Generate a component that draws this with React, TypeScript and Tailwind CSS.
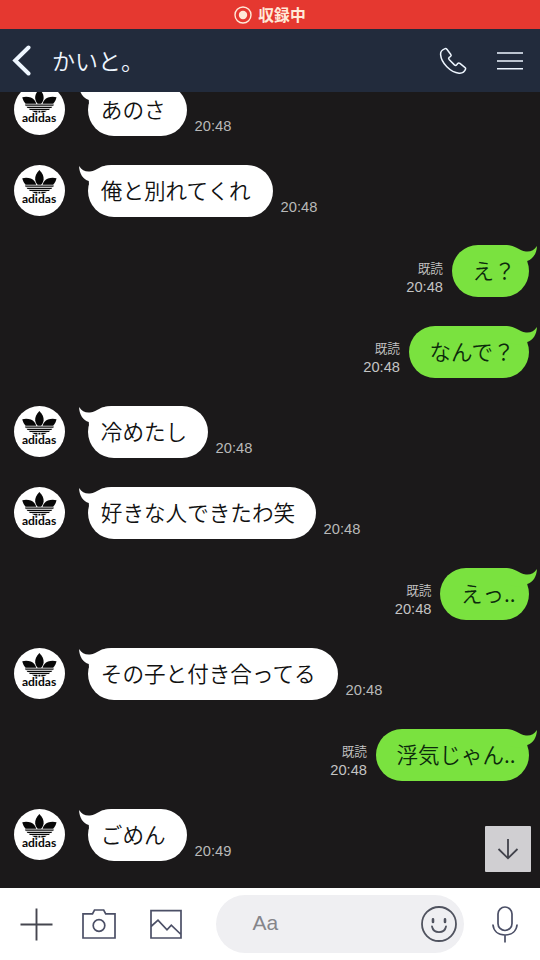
import React from "react";

type Message = {
  text: string;
  time: string;
  mine?: boolean;
  width: string;
};

const messages: Message[] = [
  { text: "あのさ", time: "20:48", width: "w-[99px]" },
  { text: "俺と別れてくれ", time: "20:48", width: "w-[185px]" },
  { text: "え？", time: "20:48", mine: true, width: "w-[77px]" },
  { text: "なんで？", time: "20:48", mine: true, width: "w-[120px]" },
  { text: "冷めたし", time: "20:48", width: "w-[120px]" },
  { text: "好きな人できたわ笑", time: "20:48", width: "w-[228px]" },
  { text: "えっ..", time: "20:48", mine: true, width: "w-[88.5px]" },
  { text: "その子と付き合ってる", time: "20:48", width: "w-[250px]" },
  { text: "浮気じゃん..", time: "20:48", mine: true, width: "w-[153px]" },
  { text: "ごめん", time: "20:49", width: "w-[99px]" },
];

function Avatar() {
  return (
    <svg viewBox="0 0 51 51" className="h-[51px] w-[51px] shrink-0">
      <circle cx="25.5" cy="25.5" r="25.5" fill="#fff" />
      <g fill="#080808">
        <path d="M25.4 5C28.600 8.300 29.900 11.500 29.600 14.500C29.300 17 28 18.900 27.100 19.700H23.700C22.800 18.900 21.500 17 21.200 14.500C20.900 11.500 22.200 8.300 25.400 5Z" />
        <path d="M8.300 13.300C13 12 18 13.300 20.300 16C21.400 17.300 22 18.700 22.200 19.700H11.600C9.900 18 8.800 15.800 8.300 13.300Z" />
        <path d="M42.500 13.300C37.800 12 32.800 13.300 30.500 16C29.400 17.300 28.800 18.700 28.600 19.700H39.200C40.900 18 42 15.800 42.500 13.300Z" />
        <path d="M11 20.400H39.800L39.300 21.700H11.500Z" />
        <path d="M12.500 22.700H38.300L37.300 23.900H13.500Z" />
        <path d="M14.600 24.800H36.200L34.800 26H16Z" />
        <path d="M18 26.800H23.500V28.600C21.200 28.500 19.300 28 18 26.800ZM24.400 26.800H26.400V28.600H24.400ZM27.300 26.800H32.800C31.500 28 29.600 28.500 27.300 28.600Z" />
      </g>
      <text x="7.900" y="38.300" textLength="34.300" lengthAdjust="spacingAndGlyphs" fontSize="11.300" fontWeight="700" fill="#080808" className="font-['Lato',sans-serif]">
        adidas
      </text>
    </svg>
  );
}

function Tail({ mine }: { mine?: boolean }) {
  return (
    <svg
      viewBox="0 0 36 22"
      className={
        mine
          ? "absolute -right-[8.500px] top-0 h-[22px] w-[36px] -scale-x-100 text-[#7ae23f]"
          : "absolute -left-[9px] top-0 h-[22px] w-[36px] text-white"
      }
    >
      <path d="M0.100 0.900C2.800 5 6.500 7.100 11 6.500C15 6 17.500 4.100 21 2.400C24.500 0.700 28 0 35 0V16L10 20L9.800 16C4 14 0.200 8.500 0.100 0.900Z" fill="currentColor" />
    </svg>
  );
}

function Row({ message }: { message: Message }) {
  const { text, time, mine, width } = message;
  if (mine) {
    return (
      <div className="flex h-[52px] shrink-0 justify-end pr-[11.500px]">
        <div className="mr-[8.500px] flex flex-col items-end pt-[12.500px] text-[#c4c4c4]">
          <span className="text-[12.700px] font-[350] leading-[19px]">既読</span>
          <span className="font-['Liberation_Sans',sans-serif] text-[14.700px] leading-[20px]">{time}</span>
        </div>
        <div className={`relative h-[52px] shrink-0 rounded-[26px] bg-[#7ae23f] pl-[21px] ${width}`}>
          <Tail mine />
          <p className="relative whitespace-nowrap text-[21.500px] font-[350] leading-[49px] text-[#0c2a0c]">{text}</p>
        </div>
      </div>
    );
  }
  return (
    <div className="flex h-[52px] shrink-0 pl-[14.300px]">
      <Avatar />
      <div className={`relative ml-[22.500px] h-[52px] shrink-0 rounded-[26px] bg-white pl-[13px] ${width}`}>
        <Tail />
        <p className="relative whitespace-nowrap text-[21.600px] font-[350] leading-[49px] text-[#111]">{text}</p>
      </div>
      <span className="ml-[7.800px] self-end pb-[1px] font-['Liberation_Sans',sans-serif] text-[14.700px] leading-[18px] text-[#b9b9b9]">{time}</span>
    </div>
  );
}

export default function App() {
  return (
    <div className="flex h-[960px] w-[540px] flex-col overflow-hidden bg-[#1b191a] font-['Noto_Sans_CJK_JP',sans-serif]">
      <div className="flex h-[29px] shrink-0 items-center justify-center gap-[6px] bg-[#e53830] text-[#ffe9d8]">
        <svg viewBox="0 0 18 18" className="h-[18px] w-[18px]" fill="none">
          <circle cx="9" cy="9" r="8" stroke="currentColor" strokeWidth="1.400" />
          <circle cx="9" cy="9" r="4.200" fill="currentColor" />
        </svg>
        <span className="text-[15.800px] font-bold leading-[26px]">収録中</span>
      </div>

      <header className="flex h-[63px] shrink-0 items-center bg-[#222b3c] pl-[12px] pr-[16px] text-[#eef6ff]">
        <svg viewBox="0 0 20 32" className="h-[32px] w-[20px]" fill="none" stroke="currentColor" strokeWidth="4" strokeLinecap="round" strokeLinejoin="miter">
          <path d="M16.500 2.500L3.200 15.500L16.500 28.500" />
        </svg>
        <h1 className="ml-[20px] flex-1 text-[23px] font-[350] leading-[57px]">かいと。</h1>
        <svg viewBox="0 0 28 28" className="h-[28px] w-[28px]" fill="none" stroke="currentColor" strokeWidth="1.500" strokeLinejoin="round">
          <path d="M6.100 1.600C3.200 2.600 1.300 4.600 1.600 7.600C2.300 16 11.500 25.500 20 26.200C23.500 26.500 25.700 24.700 26.600 22.100C26.800 21.500 26.600 21 26.100 20.600L20.900 16.400C20.100 15.800 19.300 15.900 18.700 16.600L17.700 17.800C17 18.600 16.200 18.500 15.400 17.900L10.100 12.500C9.500 11.800 9.500 11 10.200 10.400L11.500 9.500C12.200 9 12.300 8.200 11.800 7.500L7.900 2.200C7.400 1.600 6.800 1.400 6.100 1.600Z" />
        </svg>
        <svg viewBox="0 0 28 20" className="ml-[29px] h-[20px] w-[28px]" stroke="currentColor" strokeWidth="1.500">
          <path d="M1 2H27M1 10H27M1 17.800H27" />
        </svg>
      </header>

      <main className="relative flex h-[796px] shrink-0 flex-col justify-end gap-[28.620px] overflow-hidden pb-[26.600px]">
        {messages.map((m, i) => (
          <Row key={i} message={m} />
        ))}
        <button className="absolute bottom-[16px] right-[9px] flex h-[46px] w-[46px] items-center justify-center rounded-[1px] bg-[#d0cfd2] text-[#41424b]">
          <svg viewBox="0 0 22 22" className="h-[22px] w-[22px]" fill="none" stroke="currentColor" strokeWidth="1.800">
            <path d="M11 1V20.500M1.500 11L11 20.300L20.500 11" />
          </svg>
        </button>
      </main>

      <footer className="flex h-[72px] shrink-0 items-center bg-white pl-[20px] text-[#4b4f66]">
        <svg viewBox="0 0 33 33" className="h-[33px] w-[33px] text-[#45464f]" stroke="currentColor" strokeWidth="1.900">
          <path d="M16.500 0.500V32.500M0.500 16.500H32.500" />
        </svg>
        <svg viewBox="0 0 34 30" className="ml-[29px] h-[30px] w-[34px]" fill="none" stroke="currentColor" strokeWidth="1.700">
          <path d="M1 4.800H10.500L12.500 1H21.700L23.700 4.800H33V29H1Z" />
          <circle cx="17" cy="16.500" r="5.800" />
        </svg>
        <svg viewBox="0 0 32 30" className="ml-[34px] h-[30px] w-[32px]" fill="none" stroke="currentColor" strokeWidth="1.700">
          <path d="M1 1.600H31V29H1ZM1 17.500L8 11.200L17 20.800L21.300 16.200L31 25.500" />
        </svg>
        <div className="ml-[34px] flex h-[58px] w-[248px] items-center rounded-full bg-[#efeff2] pl-[36.500px] pr-[7.500px]">
          <span className="flex-1 pb-[2px] font-['Liberation_Sans',sans-serif] text-[21px] text-[#85858a]">Aa</span>
          <svg viewBox="0 0 36 36" className="h-[36px] w-[36px] text-[#50535f]" fill="none" stroke="currentColor" strokeWidth="1.800">
            <circle cx="18" cy="18" r="17" />
            <path d="M11 20.500C12.500 28 23.500 28 25 20.500" strokeLinecap="round" />
            <path d="M12 13.400V16M24 13.400V16" strokeWidth="2.600" strokeLinecap="round" />
          </svg>
        </div>
        <svg viewBox="0 0 26 37" className="ml-[28px] h-[37px] w-[26px]" fill="none" stroke="currentColor" strokeWidth="1.700">
          <rect x="6" y="1" width="14" height="23.500" rx="7" />
          <path d="M0.900 18.500C1.500 25 6 29 13 29C20 29 24.500 25 25.100 18.500M13 29V36.500" />
        </svg>
      </footer>
    </div>
  );
}
